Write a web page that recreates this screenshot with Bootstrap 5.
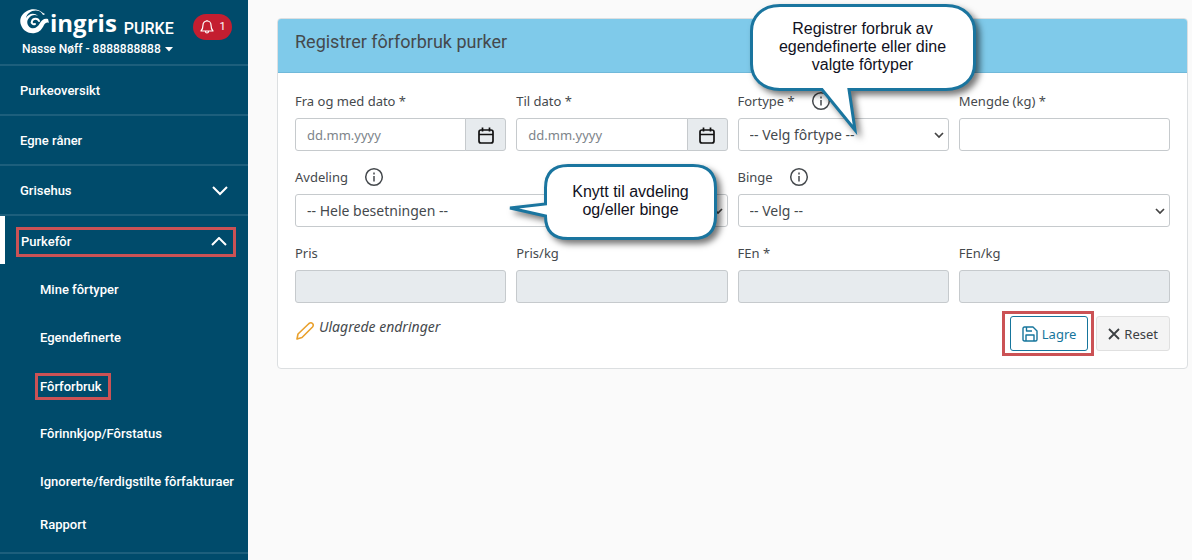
<!DOCTYPE html>
<html lang="no">
<head>
<meta charset="utf-8">
<meta name="viewport" content="width=device-width, initial-scale=1">
<title>Ingris Purke – Fôrforbruk</title>
<link rel="stylesheet" href="https://cdn.jsdelivr.net/npm/bootstrap@5.3.0/dist/css/bootstrap.min.css">
<style>
  body { background: #fafafa; color: #45494d; font: 13px/20px "Noto Sans", sans-serif; }
  svg { fill: none; stroke: currentColor; flex: none; }
  .sidebar { width: 248px; background: #004b6b; font: 500 13px/20px Roboto, sans-serif; }
  .sidebar a, .sidebar button { color: #fff; text-decoration: none; }
  .sidebar-head { height: 66px; padding: 9px 16px 0 20px; border-bottom: 2px solid #1d5f7c; }
  .wordmark { font: 700 24px/28px "Open Sans", sans-serif; }
  .product { font: 500 16px/24px Roboto, sans-serif; padding-top: 8px; margin-left: 7px; }
  .alarm { background: #c41e30; width: 39px; height: 26px; margin-top: 5px; font-size: 11px; }
  .account { font-size: 12px; line-height: 16px; padding-left: 2px; }
  .side-item { height: 50px; padding: 2px 20px 0; border-bottom: 2px solid #1d5f7c; }
  .side-item.open { height: 48px; border-bottom: 0; border-left: 5px solid #fff; padding: 4px 12px 0 11px; }
  .marked { border: 3px solid #cb5255; }
  .side-item .marked { height: 30px; width: 100%; padding: 0 6px 0 2px; }
  .subs { border-bottom: 2px solid #1d5f7c; padding: 2px 0 8px; }
  .subs a { height: 48px; padding-left: 40px; white-space: nowrap; }
  .subs a:last-child { height: 38px; }
  .subs .marked { margin-left: -5px; padding: 0 6px 0 2px; line-height: 21px; }
  .page { padding: 18px 4px 18px 29px; min-width: 0; }
  .form-panel { background: #fff; border-color: #dcdfe1; border-radius: 4px; }
  .form-panel .card-header { background: #7fcaea; border-color: #70b9da; height: 54px; padding: 11px 17px; border-radius: 3px 3px 0 0; }
  .card-header h1 { font: 400 18px/24px Roboto, sans-serif; margin: 0; }
  .form-panel .card-body { padding: 18px 17px 17px; }
  .fields { --bs-gutter-x: 10px; --bs-gutter-y: 16px; }
  .field-label { display: flex; align-items: center; height: 20px; margin-bottom: 7px; }
  .field-label svg { margin-left: 16px; }
  .form-control, .form-select { height: 33px; font-size: 13px; line-height: 19px; padding: 6px 11px; border-color: #c6cacd; color: #45494d; border-radius: 3px; }
  .form-select { font-size: 14px; background-position: right 4px center; background-size: 10px 10px; padding-right: 20px;
    background-image: url("data:image/svg+xml,%3csvg xmlns='http://www.w3.org/2000/svg' viewBox='0 0 10 10'%3e%3cpath fill='none' stroke='%23444' stroke-width='1.7' d='m1 3 4 4 4-4'/%3e%3c/svg%3e"); }
  .form-control::placeholder { color: #7d848a; }
  .form-control:disabled { background: #e7ebee; }
  .date-btn { width: 41px; padding: 0; background: #e7ebee; border: 1px solid #c6cacd; color: #111; border-radius: 3px; }
  .form-actions { margin-top: 13px; }
  .form-actions .btn { height: 35px; padding: 0 11px; font-size: 13px; line-height: 20px; border-radius: 3px; }
  .save-mark { margin: -5px 2px -5px 0; padding: 2px 3px 2px 5px; }
  .btn-save { color: #16759c; border-color: #16759c; background: #fff; }
  .btn-reset { color: #3c4043; background: #f4f4f4; border-color: #e0e0e0; }
  .unsaved { font-style: italic; font-size: 14px; padding-top: 1px; }
  .callout-bubble { position: absolute; z-index: 5; color: #111122; font: 16px/18px "Liberation Sans", sans-serif; text-align: center; pointer-events: none; }
  .callout-bubble svg { position: absolute; left: 0; top: 0; overflow: visible; fill: #fff; stroke: #1a759f; stroke-width: 3; filter: drop-shadow(4px 4px 3px #0008); }
  .callout-bubble span { position: relative; display: block; }
  .tip-feed { left: 17px; top: -87px; width: 226px; }
  .tip-feed span { padding-top: 16px; }
  .tip-place { left: 254px; top: -3px; width: 173px; }
  .tip-place span { padding-top: 19px; }
</style>
</head>
<body>
<div class="d-flex min-vh-100">
  <nav class="sidebar flex-shrink-0" aria-label="Hovedmeny">
    <div class="sidebar-head">
      <div class="d-flex">
        <svg width="30" height="27" viewBox="0 0 30 27" class="text-white" aria-hidden="true">
          <path fill="currentColor" stroke="none" d="M23 4C19 0 12-1 7 2 1 5-1 11 1 16c2 6 8 9 14 8 5-1 7-4 9-8 1-2 3-3 5-2l-1-4c-4-1-6 1-8 4-2 4-5 6-9 5-4-2-5-7-2-10 2-3 6-4 9-2-4-4-10-2-12 2 1-5 7-9 13-7 2 1 3 2 4 4 1 0 2-1 2-1z"/>
          <path stroke-width="2" stroke-linecap="round" d="M19 12c-1-3-6-3-7 0-1 2 1 4 3 3"/>
        </svg>
        <span class="wordmark text-white">ingris</span>
        <span class="product text-white">PURKE</span>
        <button class="alarm btn p-0 border-0 rounded-pill d-flex align-items-center justify-content-center gap-1 ms-auto" type="button" aria-label="Varsler">
          <svg width="16" height="16" viewBox="0 0 16 16" stroke-width="1.2" stroke-linejoin="round"><path d="M2 12c2-2 2-4 2-6a4 4 0 0 1 8 0c0 2 0 4 2 6ZM6.500 12.500a1.500 1.500 0 0 0 3 0M8 1v1"/></svg>1
        </button>
      </div>
      <a href="#" class="account d-flex align-items-center gap-1">Nasse Nøff - 8888888888
        <svg width="8" height="5" viewBox="0 0 8 5"><path fill="currentColor" stroke="none" d="M0 0h8L4 4.500z"/></svg></a>
    </div>
    <a href="#" class="side-item d-flex align-items-center">Purkeoversikt</a>
    <a href="#" class="side-item d-flex align-items-center">Egne råner</a>
    <a href="#" class="side-item d-flex align-items-center justify-content-between">Grisehus
      <svg width="16" height="10" viewBox="0 0 16 10" stroke-width="2"><path d="m1 1 7 7 7-7"/></svg></a>
    <a href="#" class="side-item open d-flex align-items-center"><span class="marked d-flex align-items-center justify-content-between">Purkefôr
      <svg width="16" height="10" viewBox="0 0 16 10" stroke-width="2"><path d="m1 8 7-7 7 7"/></svg></span></a>
    <div class="subs">
      <a href="#" class="d-flex align-items-center">Mine fôrtyper</a>
      <a href="#" class="d-flex align-items-center">Egendefinerte</a>
      <a href="#" class="d-flex align-items-center"><span class="marked">Fôrforbruk</span></a>
      <a href="#" class="d-flex align-items-center">Fôrinnkjop/Fôrstatus</a>
      <a href="#" class="d-flex align-items-center">Ignorerte/ferdigstilte fôrfakturaer</a>
      <a href="#" class="d-flex align-items-center">Rapport</a>
    </div>
  </nav>

  <main class="page flex-grow-1">
    <form class="card form-panel">
      <div class="card-header"><h1>Registrer fôrforbruk purker</h1></div>
      <div class="card-body">
        <div class="row fields">
          <div class="col-3">
            <label class="field-label" for="from">Fra og med dato *</label>
            <div class="input-group flex-nowrap">
              <input class="form-control" id="from" placeholder="dd.mm.yyyy">
              <button class="btn date-btn" type="button" aria-label="Velg fra dato"><svg width="18" height="18" viewBox="0 0 18 18" stroke-width="1.700"><rect x="2" y="3" width="14" height="13" rx="2"/><path d="M2 7.500h14M5.500 0.500v4M12.500 0.500v4"/></svg></button>
            </div>
          </div>
          <div class="col-3">
            <label class="field-label" for="to">Til dato *</label>
            <div class="input-group flex-nowrap">
              <input class="form-control" id="to" placeholder="dd.mm.yyyy">
              <button class="btn date-btn" type="button" aria-label="Velg til dato"><svg width="18" height="18" viewBox="0 0 18 18" stroke-width="1.700"><rect x="2" y="3" width="14" height="13" rx="2"/><path d="M2 7.500h14M5.500 0.500v4M12.500 0.500v4"/></svg></button>
            </div>
          </div>
          <div class="col-3 position-relative">
            <label class="field-label" for="feed">Fortype *
              <svg width="20" height="20" viewBox="0 0 20 20" stroke-width="1.500"><circle cx="10" cy="10" r="8.300"/><path d="M10 9v5.500M10 5.500v2"/></svg></label>
            <select class="form-select" id="feed"><option>-- Velg fôrtype --</option></select>
            <div class="callout-bubble tip-feed">
              <svg width="226" height="128" viewBox="0 0 226 128"><path d="M30 1.500H196C215 1.500 224.500 14 224.500 27V60C224.500 75 213 85.500 196 85.500H99L105 126 72 85.500H30C13 85.500 1.500 75 1.500 60V27C1.500 14 11 1.500 30 1.500Z"/></svg>
              <span>Registrer forbruk av<br>egendefinerte eller dine<br>valgte fôrtyper</span>
            </div>
          </div>
          <div class="col-3">
            <label class="field-label" for="amount">Mengde (kg) *</label>
            <input class="form-control" id="amount">
          </div>

          <div class="col-6 position-relative">
            <label class="field-label" for="dept">Avdeling
              <svg width="20" height="20" viewBox="0 0 20 20" stroke-width="1.500"><circle cx="10" cy="10" r="8.300"/><path d="M10 9v5.500M10 5.500v2"/></svg></label>
            <select class="form-select" id="dept"><option>-- Hele besetningen --</option></select>
            <div class="callout-bubble tip-place">
              <svg width="173" height="76" viewBox="0 0 173 76"><path d="M24 1.500H149Q171.500 1.500 171.500 24V52Q171.500 74.500 149 74.500H24Q1.500 74.500 1.500 52L-34 44 1.500 40V24Q1.500 1.500 24 1.500Z"/></svg>
              <span>Knytt til avdeling<br>og/eller binge</span>
            </div>
          </div>
          <div class="col-6">
            <label class="field-label" for="pen">Binge
              <svg width="20" height="20" viewBox="0 0 20 20" stroke-width="1.500"><circle cx="10" cy="10" r="8.300"/><path d="M10 9v5.500M10 5.500v2"/></svg></label>
            <select class="form-select" id="pen"><option>-- Velg --</option></select>
          </div>

          <div class="col-3"><label class="field-label" for="price">Pris</label><input class="form-control" id="price" disabled></div>
          <div class="col-3"><label class="field-label" for="pricekg">Pris/kg</label><input class="form-control" id="pricekg" disabled></div>
          <div class="col-3"><label class="field-label" for="fen">FEn *</label><input class="form-control" id="fen" disabled></div>
          <div class="col-3"><label class="field-label" for="fenkg">FEn/kg</label><input class="form-control" id="fenkg" disabled></div>
        </div>
        <div class="form-actions d-flex justify-content-between">
          <div class="unsaved d-flex align-items-start gap-1">
            <svg class="mt-1" width="20" height="20" viewBox="0 0 20 20" stroke="#e9a02c" stroke-width="1.600" stroke-linejoin="round"><path stroke="#e9a02c" d="M2 18l1-5L14 2.500q2-1.500 3.500 0t0 3.500L7 16.500Z"/></svg>
            <span>Ulagrede endringer</span>
          </div>
          <div class="d-flex">
            <div class="marked save-mark"><button class="btn btn-save d-flex align-items-center gap-1" type="button"><svg width="16" height="16" viewBox="0 0 16 16" stroke-width="1.400" stroke-linejoin="round"><path d="M1 2.500Q1 1 2.500 1H11l4 4v8.500q0 1.500-1.500 1.500h-11Q1 15 1 13.500ZM4 15V9h8v6M4.500 1v4H10"/></svg>Lagre</button></div>
            <button class="btn btn-reset d-flex align-items-center gap-1" type="reset"><svg width="12" height="12" viewBox="0 0 12 12" stroke-width="1.800"><path d="m1 1 10 10M11 1 1 11"/></svg>Reset</button>
          </div>
        </div>
      </div>
    </form>
  </main>
</div>
<script src="https://cdn.jsdelivr.net/npm/bootstrap@5.3.0/dist/js/bootstrap.bundle.min.js"></script>
</body>
</html>
